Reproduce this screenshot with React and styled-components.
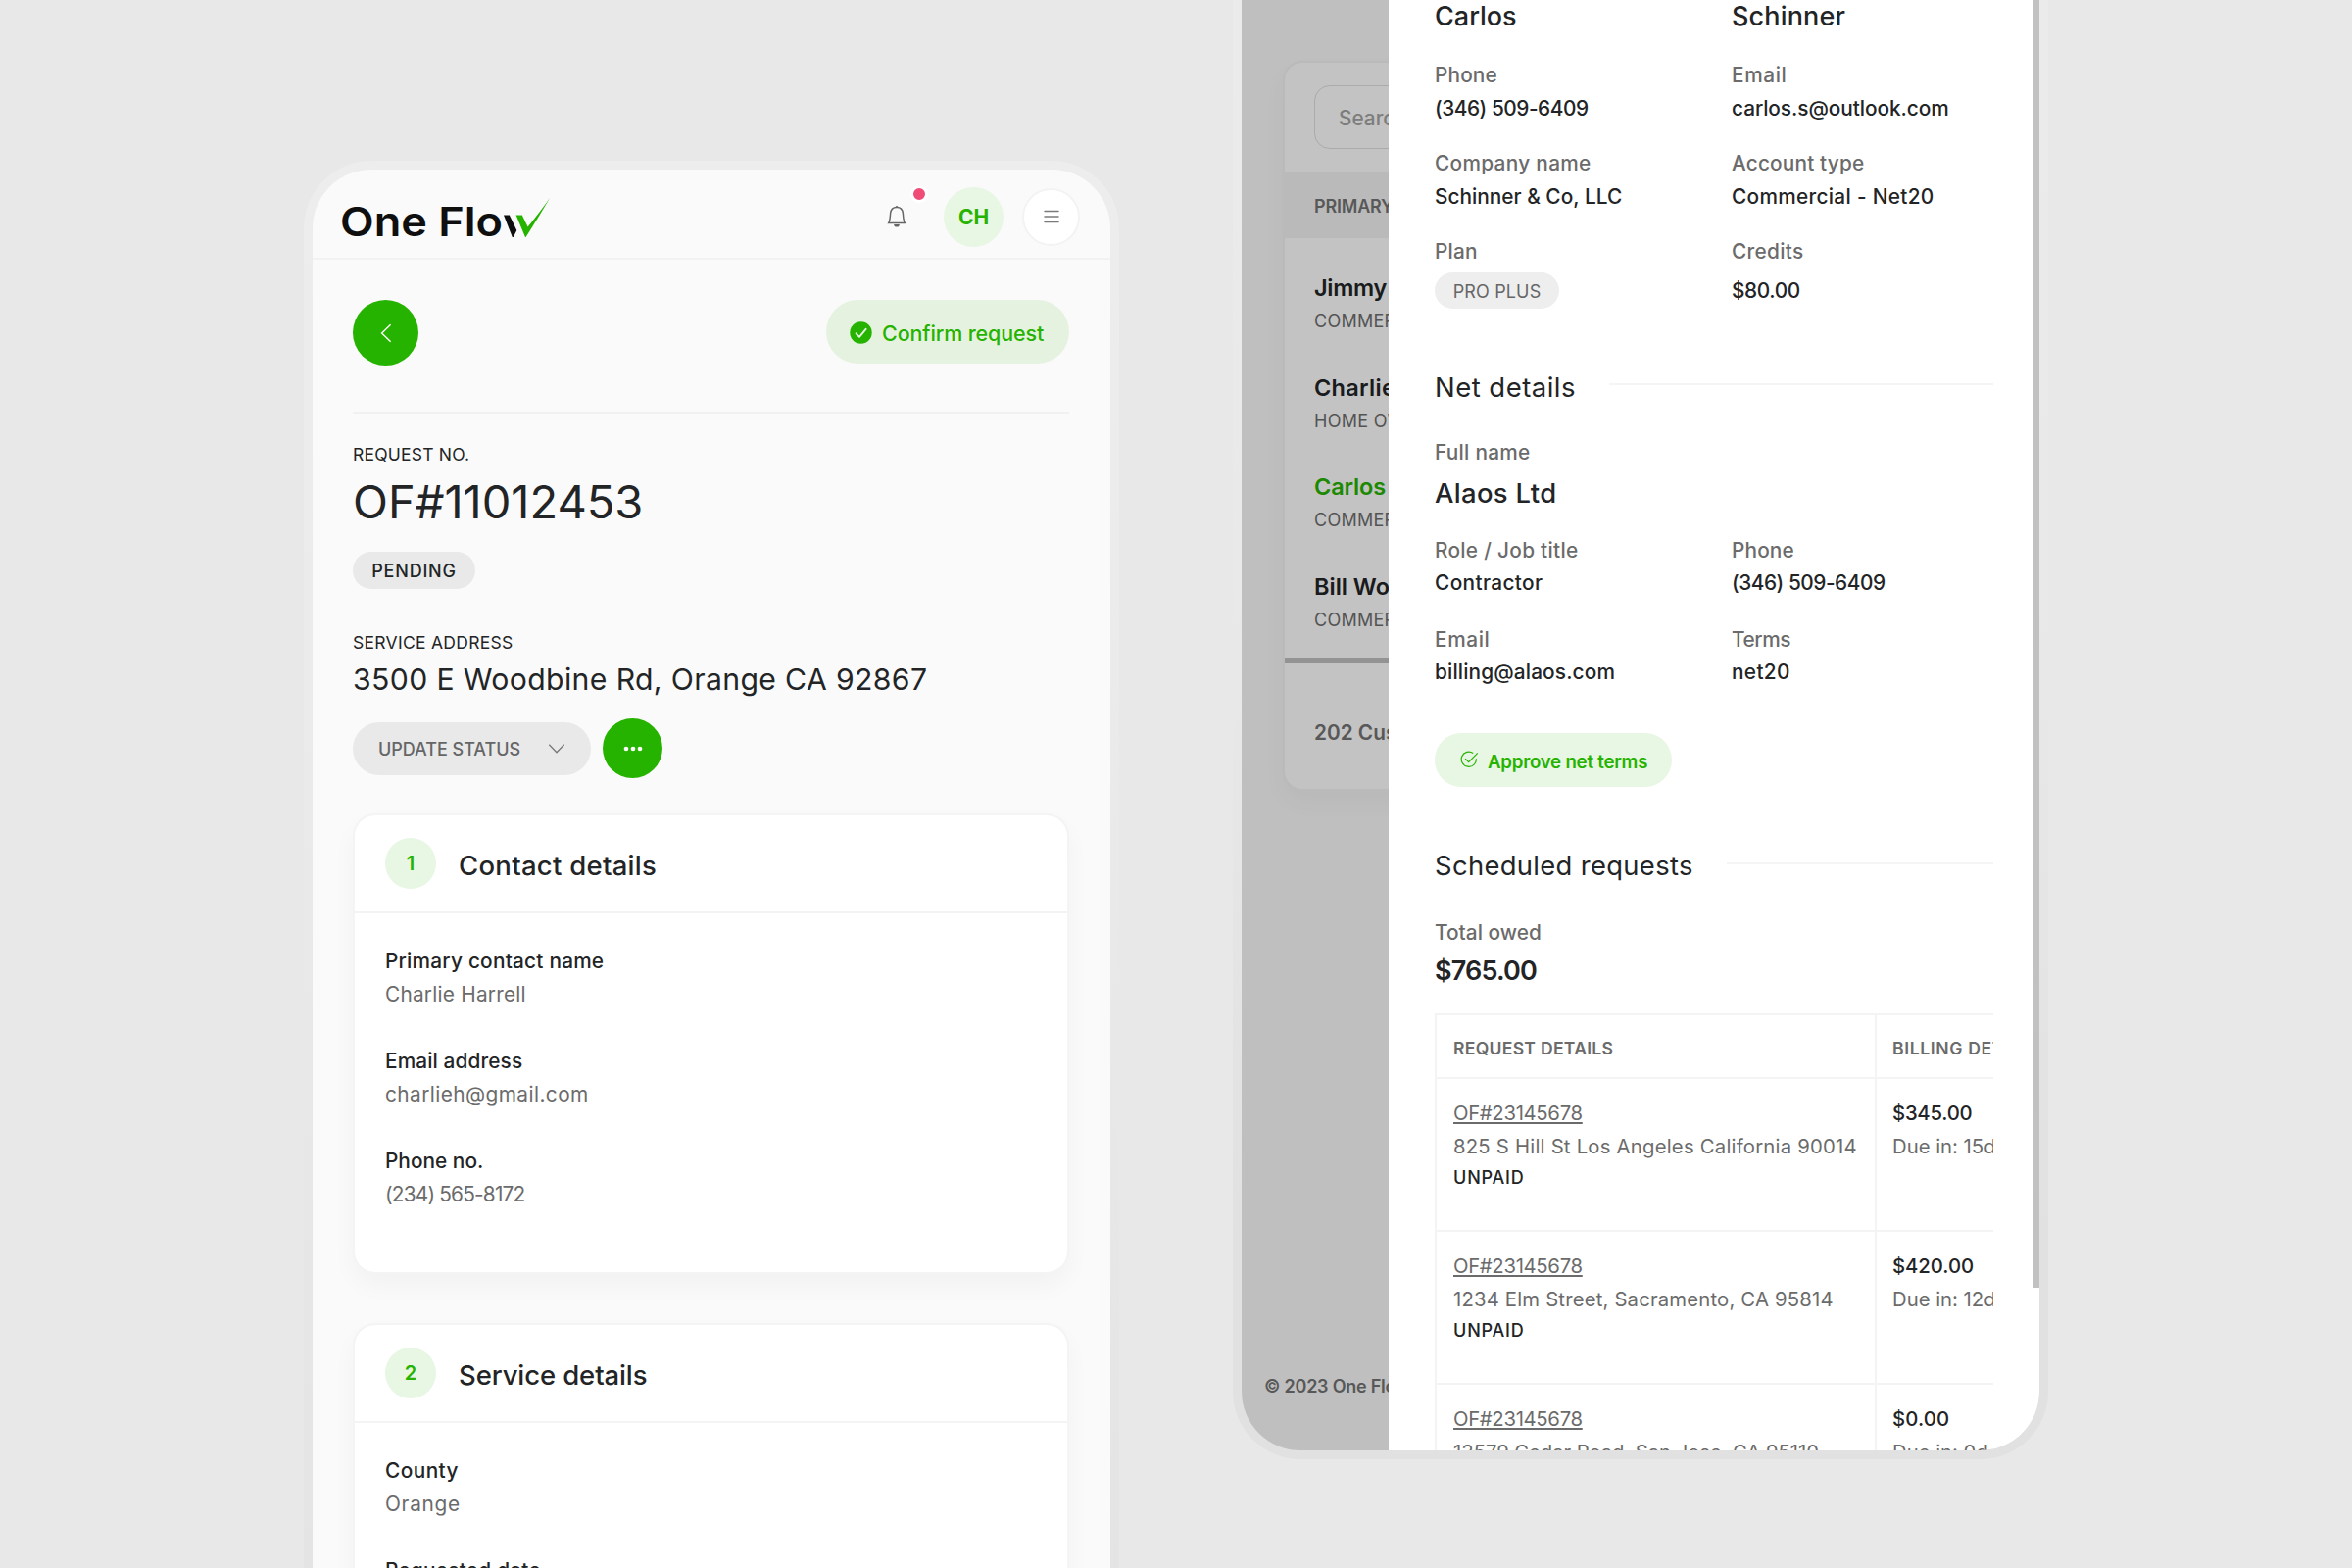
import React from 'react';
import styled, { createGlobalStyle } from 'styled-components';

const GlobalStyle = createGlobalStyle`
  * {
    box-sizing: border-box;
  }
  body {
    margin: 0;
    background: #e8e8e8;
    font-family: Inter, "Liberation Sans", sans-serif;
    color: #222426;
  }
  button {
    border: 0;
    font-family: inherit;
  }
`;

const Scene = styled.main`
  display: flex;
  align-items: flex-start;
  gap: 116px;
  width: 2400px;
  height: 1600px;
  padding-left: 310px;
  overflow: hidden;
  background: #e8e8e8;
`;

const Phone = styled.section`
  flex: none;
  width: 832px;
`;

const RequestPhone = styled(Phone)`
  height: 1700px;
  margin-top: 164px;
  padding: 9px;
  border-radius: 69px 69px 0 0;
  background: linear-gradient(#ededed, #ebebeb 30%, #e2e2e2);
`;

const CustomerPhone = styled(Phone)`
  height: 1489px;
  padding: 0 9px 9px;
  border-radius: 0 0 69px 69px;
  background: linear-gradient(#ebebeb, #e9e9e9 40%, #e1e1e1 85%);
`;

const Screen = styled.div`
  position: relative;
  height: 100%;
  overflow: hidden;
  background: #fafafa;
  border-radius: ${(p) => (p.$bottom ? '0 0 60px 60px' : '60px 60px 0 0')};
`;

const Text = styled.div`
  font-size: ${(p) => p.$size || 20.8}px;
  line-height: ${(p) => p.$line || 30}px;
  font-weight: ${(p) => p.$weight || 400};
  letter-spacing: ${(p) => p.$track || 0}em;
  color: ${(p) => p.$color || '#222426'};
  margin-top: ${(p) => p.$top || 0}px;
  white-space: nowrap;
`;

/* ---------- header ---------- */

const Header = styled.header`
  display: flex;
  align-items: center;
  justify-content: space-between;
  height: 92px;
  padding: 6px 31px 0 28px;
  border-bottom: 2px solid #f2f2f2;
`;

const Logo = styled.div`
  display: flex;
  align-items: flex-end;
  height: 52px;

  svg {
    margin-bottom: 5px;
  }
`;

const LogoName = styled.span`
  width: 167px;
  font-size: 41px;
  line-height: 41px;
  font-weight: 600;
  color: #0f0f0f;
  white-space: nowrap;
  transform: scaleX(1.1);
  transform-origin: left;
`;

const HeaderActions = styled.div`
  display: flex;
  align-items: center;
`;

const BellButton = styled.div`
  position: relative;
  display: flex;
  margin-right: 38px;
`;

const BellDot = styled.span`
  position: absolute;
  top: -20px;
  left: 24px;
  width: 18px;
  height: 18px;
  border: 3px solid #fff;
  border-radius: 50%;
  background: #ef4c78;
`;

const Avatar = styled.div`
  display: flex;
  align-items: center;
  justify-content: center;
  width: 61px;
  height: 61px;
  margin-right: 19px;
  border-radius: 50%;
  background: #e8f6e4;
  color: #26b300;
  font-size: 21px;
  font-weight: 700;
`;

const MenuButton = styled.button`
  display: flex;
  align-items: center;
  justify-content: center;
  width: 59px;
  height: 59px;
  padding: 0;
  border: 2px solid #f3f3f3;
  border-radius: 50%;
  background: #fff;
`;

/* ---------- request page ---------- */

const Page = styled.div`
  padding: 41px 42px 0 41px;
`;

const ActionRow = styled.div`
  display: flex;
  align-items: flex-start;
  justify-content: space-between;
  height: 116px;
  border-bottom: 2px solid #f1f1f1;
`;

const RoundButton = styled.button`
  display: flex;
  align-items: center;
  justify-content: center;
  width: ${(p) => p.$size}px;
  height: ${(p) => p.$size}px;
  padding: 0;
  border-radius: 50%;
  background: #26b300;
`;

const ConfirmButton = styled.button`
  display: flex;
  align-items: center;
  gap: 10px;
  width: 248px;
  height: 65px;
  padding: 2px 0 0 24px;
  border-radius: 33px;
  background: #e5f2e0;
`;

const Pill = styled.div`
  display: flex;
  align-items: center;
  justify-content: center;
  width: ${(p) => p.$width}px;
  height: ${(p) => p.$height}px;
  margin-top: ${(p) => p.$top}px;
  padding-top: 2px;
  border-radius: 19px;
  background: ${(p) => p.$fill};
`;

const StatusRow = styled.div`
  display: flex;
  align-items: center;
  gap: 12px;
  margin: 22px 0 36px;
`;

const StatusSelect = styled.div`
  display: flex;
  align-items: center;
  justify-content: space-between;
  width: 243px;
  height: 54px;
  padding: 1px 26px 0 26px;
  border-radius: 27px;
  background: #e9e9e9;
`;

const Card = styled.article`
  height: 470px;
  margin-bottom: 49.5px;
  border: 2px solid #f4f4f4;
  border-radius: 23px;
  background: #fff;
  background-clip: padding-box;
  box-shadow: 0 12px 24px rgba(0, 0, 0, 0.035);
`;

const CardHeader = styled.div`
  display: flex;
  align-items: center;
  gap: 23px;
  height: 100px;
  padding-left: 31px;
  border-bottom: 2px solid #f4f4f4;
`;

const StepNumber = styled.div`
  display: flex;
  align-items: center;
  justify-content: center;
  width: 52px;
  height: 52px;
  border-radius: 50%;
  background: #e8f6e4;
  color: #26b300;
  font-size: 20px;
  font-weight: 600;
`;

const CardBody = styled.div`
  display: flex;
  flex-direction: column;
  gap: 38px;
  padding: 34px 31px 0;
`;

/* ---------- customer list under the drawer ---------- */

const CustomerPage = styled.div`
  display: flex;
  flex-direction: column;
  justify-content: space-between;
  height: 100%;
  padding: 62px 42px 53px 23px;
`;

const ListCard = styled.div`
  height: 745px;
  margin-left: 19px;
  border: 2px solid #f4f4f4;
  border-radius: 20px;
  background: #fff;
  background-clip: padding-box;
  box-shadow: 0 12px 24px rgba(0, 0, 0, 0.035);
`;

const SearchField = styled.div`
  height: 65px;
  margin: 23px 30px;
  padding: 18px 24px;
  border: 1px solid #e0e0e0;
  border-radius: 16px;
`;

const ListHead = styled.div`
  height: 68px;
  padding: 24px 30px 0;
  background: #f4f4f4;
`;

const CustomerRows = styled.div`
  display: flex;
  flex-direction: column;
  gap: 39.7px;
  height: 434px;
  padding: 35px 30px 0;
  border-bottom: 6px solid #c0c0c0;
`;

const ListFoot = styled.div`
  padding: 56px 30px 0;
`;

const Scrim = styled.div`
  position: absolute;
  inset: 0;
  background: rgba(0, 0, 0, 0.237);
`;

/* ---------- drawer ---------- */

const Drawer = styled.aside`
  position: absolute;
  top: 0;
  right: 0;
  bottom: 0;
  width: 664px;
  padding: 0 47.5px 0 47px;
  overflow: hidden;
  background: #fff;
`;

const ScrollThumb = styled.div`
  position: absolute;
  top: 0;
  right: 0;
  width: 6px;
  height: 1314px;
  background: #c1c1c1;
`;

const FieldGrid = styled.div`
  display: grid;
  grid-template-columns: 303px 1fr;
  row-gap: ${(p) => p.$gap}px;
  margin-top: ${(p) => p.$top}px;
`;

const SectionTitle = styled.div`
  display: flex;
  align-items: center;
  gap: 34px;
  margin-top: 62px;

  &::after {
    content: '';
    flex: 1;
    height: 2px;
    margin-bottom: ${(p) => p.$lift}px;
    background: #f5f5f5;
  }
`;

const ApproveButton = styled.button`
  display: flex;
  align-items: center;
  gap: 9px;
  width: 242px;
  height: 55px;
  margin-top: 47px;
  padding: 0 0 0 26px;
  border-radius: 28px;
  background: #e8f6e4;

  svg {
    margin-bottom: 1px;
  }
`;

const RequestTable = styled.div`
  margin-top: 26px;
  border: solid #f4f4f4;
  border-width: 2px 0 0 2px;
  overflow: hidden;
`;

const TableRow = styled.div`
  display: grid;
  grid-template-columns: 447px 300px;
  height: ${(p) => p.$height}px;
`;

const Cell = styled.div`
  padding: ${(p) => p.$pad}px 17px 0;
  border: solid #f4f4f4;
  border-width: 0 0 2px 0;

  & + & {
    padding-left: 16px;
    border-left-width: 2px;
  }
`;

const RequestLink = styled(Text)`
  text-decoration: underline;
  text-decoration-thickness: 1.5px;
  text-underline-offset: 2px;
`;

const GREEN = '#26b300';
const GREY = '#6b6b6b';

const LogoTick = () => (
  <svg width="48" height="41" viewBox="0 0 48 41">
    <path d="M0 18.5 H5.8 L13.3 34 L9.8 41 H8.8 Z" fill="#0f0f0f" />
    <path d="M12.6 18.5 H18.8 L24.6 30.5 Q38 14 47.4 0.5 Q36 20 22.6 41 H22 Z" fill="#26b300" />
  </svg>
);

const BellIcon = () => (
  <svg width="20" height="24" viewBox="0 0 20 24" fill="none">
    <path d="M10 2.4 C5.8 2.4 3.9 5.2 3.6 8.8 C3.3 13 3.2 16 1.7 18.6 H18.3 C16.8 16 16.7 13 16.4 8.8 C16.1 5.2 14.2 2.4 10 2.4 Z" stroke="#666" strokeWidth="1.5" />
    <path d="M8.6 2.6 A1.4 1.6 0 0 1 11.4 2.6 Z" fill="#666" />
    <path d="M7.2 20 H12.8 A2.8 2.6 0 0 1 7.2 20 Z" fill="#666" />
  </svg>
);

const MenuIcon = () => (
  <svg width="16" height="14" viewBox="0 0 16 14" stroke="#7a7a7a" strokeWidth="1.5" strokeLinecap="round">
    <path d="M1 1.4 H15 M1 7 H15 M1 12.6 H15" />
  </svg>
);

const ChevronLeft = () => (
  <svg width="12" height="20" viewBox="0 0 12 20" fill="none" stroke="#fff" strokeWidth="1.4">
    <path d="M10.6 1.3 L1.6 10 L10.6 18.7" />
  </svg>
);

const ChevronDown = () => (
  <svg width="18" height="10" viewBox="0 0 18 10" fill="none" stroke="#777" strokeWidth="1.3">
    <path d="M1.3 0.8 L9 8.7 L16.7 0.8" />
  </svg>
);

const CheckSolid = () => (
  <svg width="23" height="23" viewBox="0 0 23 23" fill="none">
    <circle cx="11.5" cy="11.5" r="11.2" fill="#26b300" />
    <path d="M6.6 12.3 L10 15.8 L16.6 7.8" stroke="#e5f2e0" strokeWidth="1.9" strokeLinecap="round" strokeLinejoin="round" />
  </svg>
);

const CheckOutline = () => (
  <svg width="19" height="18" viewBox="0 0 19 18" fill="none" stroke="#26b300" strokeWidth="1.2">
    <path d="M13.2 2.5 A7.6 7.6 0 1 0 16.4 8.2" />
    <path d="M5.2 8.2 L8.6 11.6 L17.8 2.4" />
  </svg>
);

const Dots = () => (
  <svg width="20" height="6" viewBox="0 0 20 6" fill="#fff">
    <circle cx="3" cy="3" r="2.3" />
    <circle cx="10" cy="3" r="2.3" />
    <circle cx="17" cy="3" r="2.3" />
  </svg>
);

const contactFields = [
  { label: 'Primary contact name', lt: 0.011, value: 'Charlie Harrell', vt: 0.011 },
  { label: 'Email address', lt: 0.006, value: 'charlieh@gmail.com', vt: 0.021 },
  { label: 'Phone no.', lt: 0.0015, value: '(234) 565-8172', vt: -0.038 },
];

const serviceFields = [
  { label: 'County', lt: 0.021, value: 'Orange', vt: 0.034 },
  { label: 'Requested date', lt: 0.012, value: '', vt: 0 },
];

const customers = [
  { name: 'Jimmy', type: 'COMMERCIAL', track: -0.012 },
  { name: 'Charlie', type: 'HOME OWNER', track: 0.012 },
  { name: 'Carlos', type: 'COMMERCIAL', track: -0.006, active: true },
  { name: 'Bill Woods', type: 'COMMERCIAL', track: 0 },
];

const accountFields = [
  { label: 'Phone', lt: 0.007, value: '(346) 509-6409', vt: -0.022 },
  { label: 'Email', lt: 0.03, value: 'carlos.s@outlook.com', vt: -0.003 },
  { label: 'Company name', lt: 0.015, value: 'Schinner & Co, LLC', vt: 0.001 },
  { label: 'Account type', lt: 0.008, value: 'Commercial - Net20', vt: 0.015 },
];

const netFields = [
  { label: 'Role / Job title', lt: 0.014, value: 'Contractor', vt: 0.018 },
  { label: 'Phone', lt: 0.007, value: '(346) 509-6409', vt: -0.022 },
  { label: 'Email', lt: 0.03, value: 'billing@alaos.com', vt: 0.007 },
  { label: 'Terms', lt: -0.02, value: 'net20', vt: 0.017 },
];

const requests = [
  { no: 'OF#23145678', address: '825 S Hill St Los Angeles California 90014', track: 0.011, amount: '$345.00', at: -0.011, due: 'Due in: 15d' },
  { no: 'OF#23145678', address: '1234 Elm Street, Sacramento, CA 95814', track: 0.009, amount: '$420.00', at: -0.001, due: 'Due in: 12d' },
  { no: 'OF#23145678', address: '13579 Cedar Road, San Jose, CA 95110', track: -0.003, amount: '$0.00', at: 0.008, due: 'Due in: 0d' },
];

function DetailCard({ number, title, track, fields }) {
  return (
    <Card>
      <CardHeader>
        <StepNumber>{number}</StepNumber>
        <Text $size={27.5} $line={34} $weight={500} $track={track} $top={4}>{title}</Text>
      </CardHeader>
      <CardBody>
        {fields.map((f) => (
          <div key={f.label}>
            <Text $weight={500} $track={f.lt}>{f.label}</Text>
            {f.value && <Text $color={GREY} $track={f.vt} $top={4}>{f.value}</Text>}
          </div>
        ))}
      </CardBody>
    </Card>
  );
}

function Field({ field, gap }) {
  return (
    <div>
      <Text $weight={500} $color={GREY} $track={field.lt}>{field.label}</Text>
      <Text $weight={500} $track={field.vt} $top={gap}>{field.value}</Text>
    </div>
  );
}

function RequestScreen() {
  return (
    <RequestPhone>
      <Screen>
        <Header>
          <Logo>
            <LogoName>One Flo</LogoName>
            <LogoTick />
          </Logo>
          <HeaderActions>
            <BellButton>
              <BellIcon />
              <BellDot />
            </BellButton>
            <Avatar>CH</Avatar>
            <MenuButton>
              <MenuIcon />
            </MenuButton>
          </HeaderActions>
        </Header>
        <Page>
          <ActionRow>
            <RoundButton $size={67}>
              <ChevronLeft />
            </RoundButton>
            <ConfirmButton>
              <CheckSolid />
              <Text $size={21.5} $weight={500} $track={-0.006} $color={GREEN} $top={1}>Confirm request</Text>
            </ConfirmButton>
          </ActionRow>
          <Text $size={17.5} $line={24} $track={0.012} $top={30}>REQUEST NO.</Text>
          <Text $size={47} $line={56} $top={8}>OF#11012453</Text>
          <Pill $width={125} $height={38} $top={23} $fill="#e9e9e9">
            <Text $size={18} $weight={500} $track={0.044}>PENDING</Text>
          </Pill>
          <Text $size={17.5} $line={24} $track={0.016} $top={43}>SERVICE ADDRESS</Text>
          <Text $size={30.2} $line={36} $track={0.012} $top={7}>3500 E Woodbine Rd, Orange CA 92867</Text>
          <StatusRow>
            <StatusSelect>
              <Text $size={18} $weight={500} $track={-0.002} $color="#666" $top={1}>UPDATE STATUS</Text>
              <ChevronDown />
            </StatusSelect>
            <RoundButton $size={61}>
              <Dots />
            </RoundButton>
          </StatusRow>
          <DetailCard number="1" title="Contact details" track={0.01} fields={contactFields} />
          <DetailCard number="2" title="Service details" track={-0.004} fields={serviceFields} />
        </Page>
      </Screen>
    </RequestPhone>
  );
}

function CustomerDrawer() {
  return (
    <Drawer>
      <FieldGrid $gap={0} $top={0}>
        <Text $size={27} $line={34} $weight={500}>Carlos</Text>
        <Text $size={27} $line={34} $weight={500} $track={0.006}>Schinner</Text>
      </FieldGrid>
      <FieldGrid $gap={26} $top={28}>
        {accountFields.map((f) => (
          <Field key={f.label} field={f} gap={4} />
        ))}
        <div>
          <Text $weight={500} $color={GREY} $track={0.01}>Plan</Text>
          <Pill $width={127} $height={37} $top={6} $fill="#eeeeee">
            <Text $size={18} $track={0.008} $color="#666" $top={1}>PRO PLUS</Text>
          </Pill>
        </div>
        <div>
          <Text $weight={500} $color={GREY} $track={0.015}>Credits</Text>
          <Text $weight={500} $line={35} $track={-0.018} $top={7}>$80.00</Text>
        </div>
      </FieldGrid>

      <SectionTitle $lift={6}>
        <Text $size={27.5} $line={34} $track={0.017} $top={1}>Net details</Text>
      </SectionTitle>
      <Text $weight={500} $color={GREY} $track={0.013} $top={35}>Full name</Text>
      <Text $size={27.4} $line={34} $weight={500} $track={0.013} $top={9}>Alaos Ltd</Text>
      <FieldGrid $gap={27.5} $top={27}>
        {netFields.map((f) => (
          <Field key={f.label} field={f} gap={3} />
        ))}
      </FieldGrid>
      <ApproveButton>
        <CheckOutline />
        <Text $size={18.7} $weight={600} $track={-0.013} $color={GREEN} $top={5}>Approve net terms</Text>
      </ApproveButton>

      <SectionTitle $lift={3}>
        <Text $size={27.4} $line={34} $track={0.012} $top={1}>Scheduled requests</Text>
      </SectionTitle>
      <Text $weight={500} $color={GREY} $track={0.002} $top={37}>Total owed</Text>
      <Text $size={27} $line={34} $weight={600} $track={-0.03} $top={7}>$765.00</Text>
      <RequestTable>
        <TableRow $height={65}>
          <Cell $pad={19}>
            <Text $size={17.6} $weight={600} $track={0.015} $color={GREY}>REQUEST DETAILS</Text>
          </Cell>
          <Cell $pad={19}>
            <Text $size={17.6} $weight={600} $track={0.035} $color={GREY}>BILLING DETAILS</Text>
          </Cell>
        </TableRow>
        {requests.map((r) => (
          <TableRow key={r.amount} $height={156}>
            <Cell $pad={20}>
              <RequestLink as="a" $size={20.3} $track={-0.0156} $color={GREY}>{r.no}</RequestLink>
              <Text $size={20.3} $track={r.track} $color={GREY} $top={4}>{r.address}</Text>
              <Text $size={18} $line={28} $weight={500} $track={0.045} $top={3}>UNPAID</Text>
            </Cell>
            <Cell $pad={20}>
              <Text $size={20.3} $weight={500} $track={r.at}>{r.amount}</Text>
              <Text $size={20.3} $color={GREY} $top={4}>{r.due}</Text>
            </Cell>
          </TableRow>
        ))}
      </RequestTable>
      <ScrollThumb />
    </Drawer>
  );
}

function CustomerScreen() {
  return (
    <CustomerPhone>
      <Screen $bottom>
        <CustomerPage>
          <ListCard>
            <SearchField>
              <Text $color="#a4a4a4" $weight={500}>Search</Text>
            </SearchField>
            <ListHead>
              <Text $size={18} $line={24} $weight={600} $track={-0.011} $color="#747474">PRIMARY</Text>
            </ListHead>
            <CustomerRows>
              {customers.map((c) => (
                <div key={c.name}>
                  <Text $size={23.5} $line={32} $weight={600} $track={c.track} $color={c.active && GREEN}>{c.name}</Text>
                  <Text $size={18} $line={24} $color="#6e6e6e" $track={0.015} $top={6}>{c.type}</Text>
                </div>
              ))}
            </CustomerRows>
            <ListFoot>
              <Text $weight={600} $color="#747474">202 Customers</Text>
            </ListFoot>
          </ListCard>
          <Text $size={18} $line={24} $weight={600} $track={-0.013} $color="#747474">© 2023 One Flow</Text>
        </CustomerPage>
        <Scrim />
        <CustomerDrawer />
      </Screen>
    </CustomerPhone>
  );
}

export default function App() {
  return (
    <>
      <GlobalStyle />
      <Scene>
        <RequestScreen />
        <CustomerScreen />
      </Scene>
    </>
  );
}
